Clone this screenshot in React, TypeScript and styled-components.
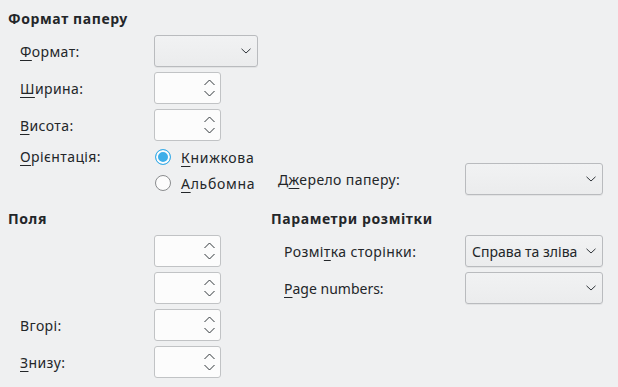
import styled, { createGlobalStyle } from "styled-components";

const GlobalStyle = createGlobalStyle`
  html, body {
    margin: 0;
    padding: 0;
    background: #eff0f1;
  }
  body {
    font-family: "Noto Sans", "DejaVu Sans", sans-serif;
    font-size: 14px;
    color: #232629;
  }
`;

const Page = styled.div`
  width: 618px;
  height: 387px;
  box-sizing: border-box;
  padding: 10px 8px 0 8px;
  display: grid;
  grid-template-columns: 146px 117px 194px 138px;
  row-gap: 5px;
  align-content: start;
`;

const Heading = styled.div<{ $span?: string; $top?: number }>`
  grid-column: ${(p) => p.$span || "1 / -1"};
  font-weight: bold;
  line-height: 18px;
  height: 18px;
  margin-bottom: 2px;
  margin-top: ${(p) => p.$top || 0}px;
  letter-spacing: 0.6px;
  white-space: nowrap;
`;

const Label = styled.div<{ $indent?: number; $col?: number; $end?: boolean; $ls?: number }>`
  grid-column: ${(p) => p.$col || 1};
  padding-left: ${(p) => p.$indent ?? 12}px;
  height: 32px;
  display: flex;
  align-items: center;
  white-space: nowrap;
  letter-spacing: ${(p) => p.$ls ?? 0.4}px;
  align-self: ${(p) => (p.$end ? "end" : "start")};
  margin-bottom: ${(p) => (p.$end ? -1 : 0)}px;
`;

const TopLabel = styled.div`
  grid-column: 1;
  padding-left: 12px;
  height: 22px;
  line-height: 22px;
  letter-spacing: 0.4px;
  align-self: start;
`;

const Mn = styled.span`
  text-decoration: underline;
  text-decoration-thickness: 1px;
  text-underline-offset: 3px;
`;

const ComboBox = styled.div<{ $width?: number; $col?: number; $end?: boolean }>`
  grid-column: ${(p) => p.$col || 2};
  width: ${(p) => p.$width || 104}px;
  height: 32px;
  box-sizing: border-box;
  border: 1px solid #b9bbbe;
  border-radius: 3px;
  background: linear-gradient(#f1f2f3, #ebeced);
  box-shadow: 0 1px 0 rgba(0, 0, 0, 0.05);
  display: flex;
  align-items: center;
  padding: 0 6px 0 6px;
  gap: 3px;
  align-self: ${(p) => (p.$end ? "end" : "start")};
  margin-bottom: ${(p) => (p.$end ? -1 : 0)}px;
`;

const ComboText = styled.span`
  flex: 1;
  white-space: nowrap;
  overflow: hidden;
`;

const SpinBox = styled.div`
  grid-column: 2;
  width: 67px;
  height: 32px;
  box-sizing: border-box;
  border: 1px solid #c1c3c5;
  border-radius: 3px;
  background: #fcfcfc;
  display: flex;
  justify-content: flex-end;
  align-items: center;
  padding-right: 5px;
`;

const RadioGroup = styled.div`
  grid-column: 2;
  display: flex;
  flex-direction: column;
  gap: 4px;
`;

const RadioItem = styled.div`
  height: 22px;
  display: flex;
  align-items: center;
  gap: 10px;
  padding-left: 1px;
  letter-spacing: 0.7px;
  white-space: nowrap;
`;

const RadioCircle = styled.span<{ $checked?: boolean }>`
  width: 16px;
  height: 16px;
  box-sizing: border-box;
  border-radius: 50%;
  border: 1px solid ${(p) => (p.$checked ? "#3daee9" : "#8a8c8e")};
  background: ${(p) => (p.$checked ? "#3daee9" : "#fcfcfc")};
  box-shadow: ${(p) => (p.$checked ? "inset 0 0 0 2px #fcfcfc" : "none")};
  flex: none;
`;

function ChevronDown() {
  return (
    <svg width="10" height="6" viewBox="0 0 10 6" style={{ flex: "none" }}>
      <polyline points="0.5,0.8 5,5 9.5,0.8" fill="none" stroke="#31363b" strokeWidth="1" />
    </svg>
  );
}

function SpinArrows() {
  return (
    <svg width="11" height="18" viewBox="0 0 11 18">
      <polyline points="0.5,6 5.5,1 10.5,6" fill="none" stroke="#31363b" strokeWidth="1" />
      <polyline points="0.5,12 5.5,17 10.5,12" fill="none" stroke="#31363b" strokeWidth="1" />
    </svg>
  );
}

function Combo({ text, width, col, end }: { text?: string; width?: number; col?: number; end?: boolean }) {
  return (
    <ComboBox $width={width} $col={col} $end={end}>
      <ComboText>{text}</ComboText>
      <ChevronDown />
    </ComboBox>
  );
}

function Spin() {
  return (
    <SpinBox>
      <SpinArrows />
    </SpinBox>
  );
}

export default function App() {
  return (
    <>
      <GlobalStyle />
      <Page>
        <Heading>Формат паперу</Heading>

        <Label><span><Mn>Ф</Mn>ормат:</span></Label>
        <Combo />

        <Label><span><Mn>Ш</Mn>ирина:</span></Label>
        <Spin />

        <Label><span><Mn>В</Mn>исота:</span></Label>
        <Spin />

        <TopLabel><Mn>О</Mn>рієнтація:</TopLabel>
        <RadioGroup>
          <RadioItem>
            <RadioCircle $checked />
            <span><Mn>К</Mn>нижкова</span>
          </RadioItem>
          <RadioItem>
            <RadioCircle />
            <span><Mn>А</Mn>льбомна</span>
          </RadioItem>
        </RadioGroup>
        <Label $col={3} $indent={7} $end><span>Д<Mn>ж</Mn>ерело паперу:</span></Label>
        <Combo col={4} width={138} end />

        <Heading $span="1 / 3" $top={11}>Поля</Heading>
        <Heading $span="3 / 5" $top={11}>Параметри розмітки</Heading>

        <Label />
        <Spin />
        <Label $col={3} $indent={13}><span>Розмі<Mn>т</Mn>ка сторінки:</span></Label>
        <Combo col={4} width={138} text="Справа та зліва" />

        <Label />
        <Spin />
        <Label $col={3} $indent={13} $ls={0}><span><Mn>P</Mn>age numbers:</span></Label>
        <Combo col={4} width={138} />

        <Label><span>Вгорі:</span></Label>
        <Spin />

        <Label><span><Mn>З</Mn>низу:</span></Label>
        <Spin />
      </Page>
    </>
  );
}
